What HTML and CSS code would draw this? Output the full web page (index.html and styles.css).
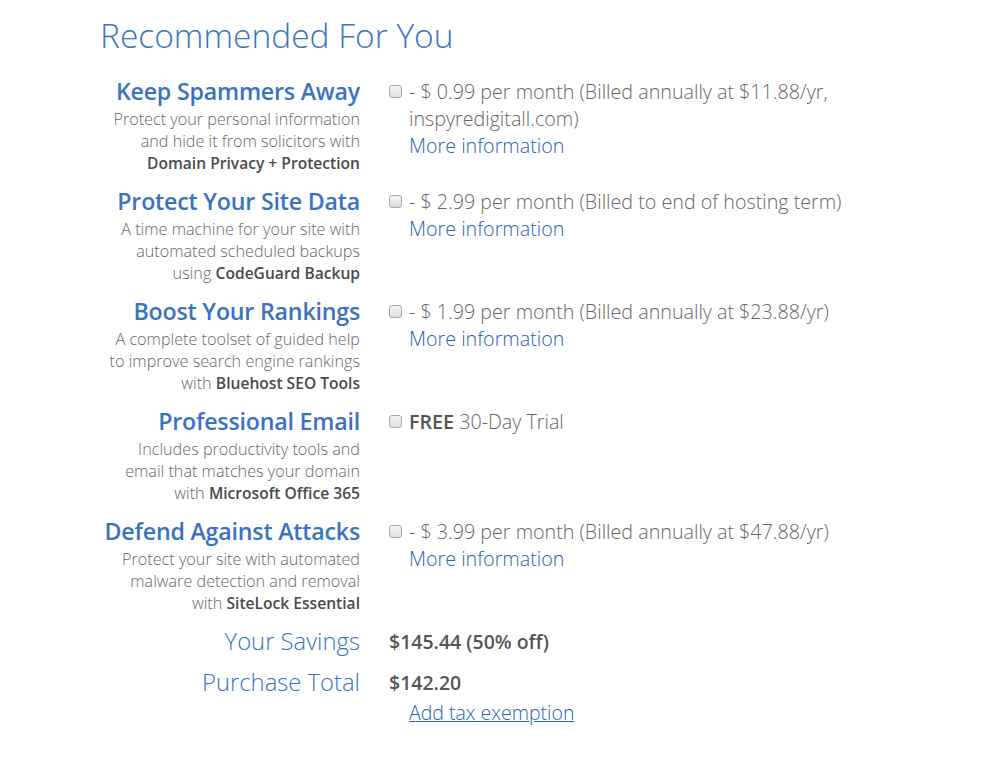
FILE: index.html
```html
<!DOCTYPE html>
<html>
<head>
<meta charset="utf-8">
<link rel="stylesheet" href="styles.css">
</head>
<body>
<div class="page">
  <h1 class="title">Recommended For You</h1>
  <div class="rows">
    <div class="row">
      <div class="left">
        <div class="head">Keep Spammers Away</div>
        <div class="desc">Protect your personal information<br>and hide it from solicitors with<br><b>Domain Privacy + Protection</b></div>
      </div>
      <div class="right">
        <span class="box"></span>
        <div class="text">- $ 0.99 per month (Billed annually at $11.88/yr,<br>inspyredigitall.com)<br><a class="more">More information</a></div>
      </div>
    </div>
    <div class="row">
      <div class="left">
        <div class="head">Protect Your Site Data</div>
        <div class="desc">A time machine for your site with<br>automated scheduled backups<br>using <b>CodeGuard Backup</b></div>
      </div>
      <div class="right">
        <span class="box"></span>
        <div class="text">- $ 2.99 per month (Billed to end of hosting term)<br><a class="more">More information</a></div>
      </div>
    </div>
    <div class="row">
      <div class="left">
        <div class="head">Boost Your Rankings</div>
        <div class="desc">A complete toolset of guided help<br>to improve search engine rankings<br>with <b>Bluehost SEO Tools</b></div>
      </div>
      <div class="right">
        <span class="box"></span>
        <div class="text">- $ 1.99 per month (Billed annually at $23.88/yr)<br><a class="more">More information</a></div>
      </div>
    </div>
    <div class="row">
      <div class="left">
        <div class="head">Professional Email</div>
        <div class="desc">Includes productivity tools and<br>email that matches your domain<br>with <b>Microsoft Office 365</b></div>
      </div>
      <div class="right">
        <span class="box"></span>
        <div class="text"><b>FREE</b> 30-Day Trial</div>
      </div>
    </div>
    <div class="row">
      <div class="left">
        <div class="head">Defend Against Attacks</div>
        <div class="desc">Protect your site with automated<br>malware detection and removal<br>with <b>SiteLock Essential</b></div>
      </div>
      <div class="right">
        <span class="box"></span>
        <div class="text">- $ 3.99 per month (Billed annually at $47.88/yr)<br><a class="more">More information</a></div>
      </div>
    </div>
    <div class="sum">
      <div class="sum-label">Your Savings</div>
      <div class="sum-value">$145.44 (50% off)</div>
    </div>
    <div class="sum total">
      <div class="sum-label">Purchase Total</div>
      <div class="sum-value">$142.20<br><a class="tax">Add tax exemption</a></div>
    </div>
  </div>
</div>
</body>
</html>
```
FILE: styles.css
```css
html, body {
  margin: 0;
  padding: 0;
  background: #ffffff;
}
body {
  font-family: "Open Sans", "Liberation Sans", sans-serif;
  color: #666666;
}
.page {
  padding: 12px 0 0 80px;
}
.title {
  margin: 0 0 16px 20px;
  font-size: 33.5px;
  font-weight: 300;
  line-height: 46px;
  color: #3c74c0;
}
.row {
  display: flex;
  margin-bottom: 10px;
}
.left {
  width: 280px;
  text-align: right;
  flex-shrink: 0;
}
.head {
  font-size: 23.2px;
  font-weight: 600;
  line-height: 34px;
  color: #3b72be;
  letter-spacing: -0.2px;
}
.desc {
  font-size: 16.2px;
  font-weight: 300;
  line-height: 22px;
  color: #666666;
}
.desc b {
  font-size: 15.6px;
  font-weight: 600;
  color: #4a4a4a;
}
.right {
  display: flex;
  align-items: flex-start;
  margin-left: 29px;
  padding-top: 4px;
}
.box {
  width: 11px;
  height: 11px;
  border: 1px solid #a9a9a9;
  border-radius: 3px;
  background: linear-gradient(#f4f4f4, #dedede);
  margin-top: 7px;
  margin-right: 7px;
  flex-shrink: 0;
}
.text {
  font-size: 19.7px;
  font-weight: 300;
  line-height: 27px;
  color: #666666;
}
.text b {
  font-weight: 600;
  color: #555555;
}
.more {
  color: #2d5fb5;
  text-decoration: none;
}
.sum {
  display: flex;
  align-items: flex-start;
  margin-top: 10px;
}
.sum.total {
  margin-top: 7px;
}
.sum-label {
  width: 280px;
  text-align: right;
  font-size: 23.8px;
  font-weight: 300;
  line-height: 34px;
  color: #3b72be;
  flex-shrink: 0;
}
.sum-value {
  margin-left: 29px;
  padding-top: 4px;
  font-size: 19.5px;
  font-weight: 600;
  line-height: 27px;
  color: #555555;
}
.tax {
  display: inline-block;
  margin-left: 20px;
  margin-top: 3px;
  font-weight: 300;
  color: #2d5fb5;
  text-decoration: underline;
}
```
